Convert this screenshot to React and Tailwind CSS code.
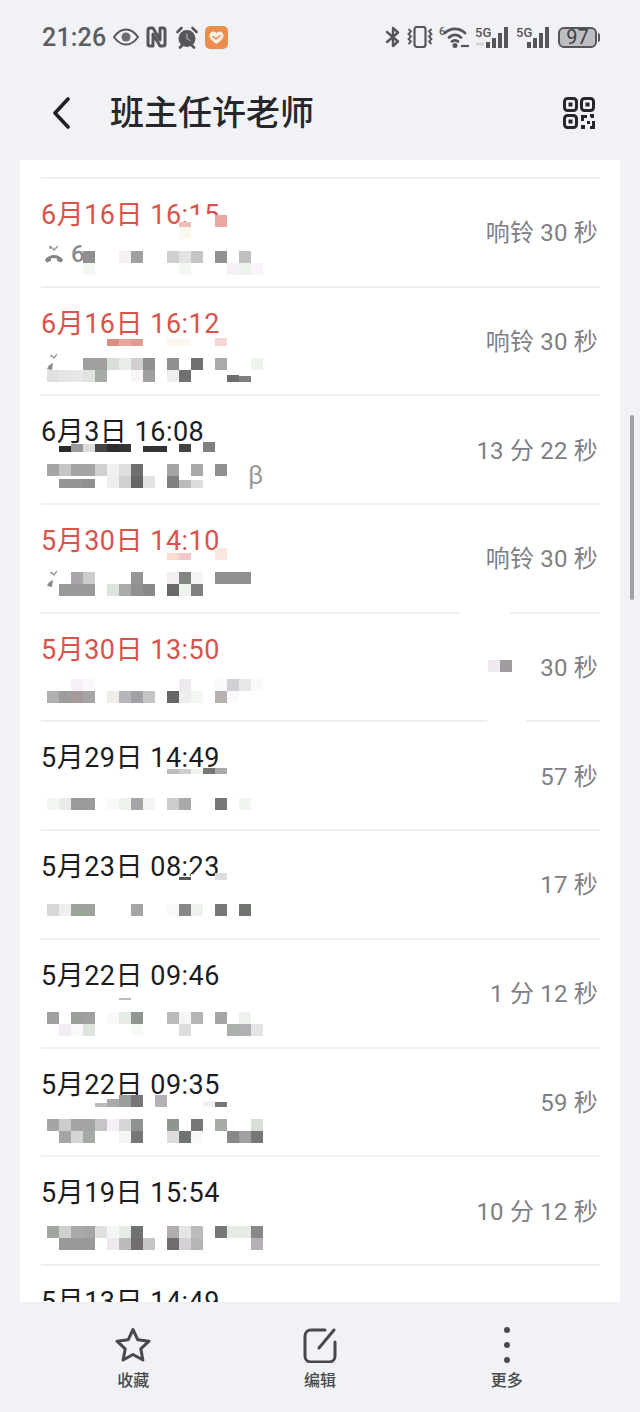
import React from "react";

const FONT = "font-['Roboto','Noto_Sans_CJK_SC',sans-serif]";
const RED = "text-[#d9534b]";
const BLACK = "text-[#1c1c1e]";

// mosaic cells: [col, row, colour, height?]  row 3/4 are the number line, 0-2 lie over the date
const calls = [
  {
    date: "6月16日 16:15", missed: true, right: "响铃 30 秒", dy: 72, icon: "missed",
    cells: [
      [12, 0, "#ffffff"], [13, 0, "#ffffff"], [14, 0, "#e8a9a3"], [11, 0, "#eec0b5", 5], [11, 1, "#fbf8ee"],
      [3, 3, "#8f8f8f"], [6, 3, "#f4f0f4"], [7, 3, "#a0a0a0"], [10, 3, "#cfcfcf"], [11, 3, "#e3e3e3"], [12, 3, "#c5c5c5"], [14, 3, "#939393"], [16, 3, "#c0c0c0"],
      [3, 4, "#f2f7f2"], [11, 4, "#f2f7f2"], [15, 4, "#f6f0f6"], [16, 4, "#eef3ee"], [17, 4, "#faf5fa"],
    ],
  },
  {
    date: "6月16日 16:12", missed: true, right: "响铃 30 秒", dy: 70.5, icon: "stub",
    cells: [
      [5, 1, "#d89080", 7], [6, 1, "#e8a8a0", 7], [7, 1, "#e09c90", 7], [10, 1, "#fbf6ee", 7], [11, 1, "#fbf6ee", 7], [14, 1, "#f5d8d5", 8],
      [3, 3, "#a0a0a0"], [4, 3, "#a0a0a0"], [5, 3, "#d8dfd8"], [6, 3, "#e8eee8"], [7, 3, "#d0d0d0"], [8, 3, "#8f8f8f"], [10, 3, "#909090"], [12, 3, "#707070"], [14, 3, "#aaaaaa"], [17, 3, "#eef3ee"],
      [0, 4, "#e0e0e0"], [1, 4, "#e6e6e6"], [2, 4, "#e8e8e8"], [3, 4, "#dfe4df"], [4, 4, "#a5aca5"], [7, 4, "#f8f4f8"], [8, 4, "#a0a0a0"], [10, 4, "#eeeeee"], [11, 4, "#707070"], [15, 4, "#6d6d6d", 7], [16, 4, "#7f7f7f", 6],
    ],
  },
  {
    date: "6月3日 16:08", right: "13 分 22 秒", dy: 67.5, beta: true,
    cells: [
      [1, 1, "#2a2a2a", 6], [2, 1, "#999999", 8], [3, 1, "#dddddd", 8], [4, 1, "#444444", 8], [5, 1, "#2e2e2e", 8], [6, 1, "#333333", 8], [8, 1, "#333333", 6], [9, 1, "#333333", 6], [11, 1, "#444444", 8], [13, 1, "#808080", 10],
      [0, 3, "#a5a5a5"], [1, 3, "#c5c5c5"], [2, 3, "#a5a5a5"], [3, 3, "#a5a5a5"], [4, 3, "#d0d0d0"], [5, 3, "#f0f0f0"], [6, 3, "#dfdfdf"], [7, 3, "#6f6f6f"], [10, 3, "#a5a5a5"], [12, 3, "#a8a8a8"], [14, 3, "#909090"],
      [1, 4, "#959595", 9], [2, 4, "#959595", 9], [3, 4, "#909090", 9], [5, 4, "#eeeeee"], [6, 4, "#d0d0d0"], [7, 4, "#666666"], [8, 4, "#e2e2e2"], [10, 4, "#808080"], [11, 4, "#bbbbbb", 8], [12, 4, "#dddddd", 8],
    ],
  },
  {
    date: "5月30日 14:10", missed: true, right: "响铃 30 秒", dy: 67, icon: "stub", gap: null,
    cells: [
      [10, 1, "#f8dcd0", 7], [11, 1, "#f4c8c8", 7], [13, 1, "#ffffff", 7], [14, 1, "#f8e8de"],
      [2, 3, "#aaa5aa"], [3, 3, "#cccccc"], [7, 3, "#959595"], [10, 3, "#f2eef2"], [11, 3, "#808580"], [12, 3, "#f4f4f4"], [14, 3, "#8f8f8f"], [15, 3, "#8f8f8f"], [16, 3, "#8f8f8f"],
      [1, 4, "#999999"], [2, 4, "#999999"], [3, 4, "#999999"], [5, 4, "#dde3dd"], [6, 4, "#aaaaaa"], [7, 4, "#909090"], [8, 4, "#888888"], [10, 4, "#6a6a6a"], [11, 4, "#eef3ee"], [12, 4, "#808080"],
    ],
  },
  {
    date: "5月30日 13:50", missed: true, right: "30 秒", dy: 65, gap: [419, 50], patch: true,
    cells: [
      [2, 3, "#f5f0f5"], [3, 3, "#fbf8fb"], [11, 3, "#eee9ee"], [14, 3, "#fbf8fb"], [15, 3, "#d0d0d5"], [16, 3, "#e8e8e8"], [17, 3, "#fbf8fb"],
      [0, 4, "#b0b0b0"], [1, 4, "#9d9d9d"], [2, 4, "#a59c9a"], [3, 4, "#a5a5a5"], [5, 4, "#f0ece6"], [6, 4, "#b5b5bb"], [7, 4, "#a0a0a5"], [8, 4, "#c5c5c5"], [10, 4, "#666666"], [11, 4, "#eeeeee"], [12, 4, "#f2f7f2"], [14, 4, "#b8b0ae"], [15, 4, "#fbf8fb"],
    ],
  },
  {
    date: "5月29日 14:49", right: "57 秒", dy: 75.5, gap: [446, 39],
    cells: [
      [10, 0, "#bbbbbb", 5], [11, 0, "#cccccc", 5], [12, 0, "#eef3ee", 5], [13, 0, "#777777", 6], [14, 0, "#aaaaaa", 6],
      [0, 3, "#f2f7f2"], [1, 3, "#eaeaea"], [2, 3, "#999c99"], [3, 3, "#999c99"], [5, 3, "#fbf8fb"], [6, 3, "#eef3ee"], [7, 3, "#a5a5a8"], [8, 3, "#f5f5f5"], [10, 3, "#cccccc"], [11, 3, "#aaaaaa"], [14, 3, "#777777"], [16, 3, "#eef6ee"],
    ],
  },
  {
    date: "5月23日 08:23", right: "17 秒", dy: 73,
    cells: [
      [11, 0, "#555555", 3], [12, 0, "#ffffff", 6], [14, 0, "#dddde0", 7],
      [0, 3, "#d8d8d8"], [1, 3, "#eeeeee"], [2, 3, "#9ba39b"], [3, 3, "#9ba39b"], [7, 3, "#a5a5a8"], [10, 3, "#fbf8fb"], [11, 3, "#888888"], [12, 3, "#eef3ee"], [14, 3, "#777777"], [16, 3, "#707570"],
    ],
  },
  {
    date: "5月22日 09:46", right: "1 分 12 秒", dy: 72,
    cells: [
      [6, 1, "#bbbbbb", 2],
      [0, 3, "#a0a0a0"], [2, 3, "#9ba09b"], [3, 3, "#a0a0a0"], [5, 3, "#fbf8fb"], [6, 3, "#e5ebe5"], [7, 3, "#8f968f"], [10, 3, "#bbbbbb"], [11, 3, "#f5f5f5"], [12, 3, "#b5b5b5"], [14, 3, "#a5a5a5"], [16, 3, "#eef3ee"],
      [1, 4, "#f3eef3"], [2, 4, "#fbf8fb"], [3, 4, "#dde3dd"], [7, 4, "#f5faf5"], [11, 4, "#dddddd"], [15, 4, "#aab0aa"], [16, 4, "#b0b0b5"], [17, 4, "#e5e5e5"],
    ],
  },
  {
    date: "5月22日 09:35", right: "59 秒", dy: 70.5,
    cells: [
      [4, 1, "#bbbbbb", 4], [5, 1, "#aaaaaa", 8], [6, 1, "#99a099"], [7, 1, "#777777"], [9, 1, "#b5b0b5"], [13, 1, "#eef3ee", 6], [14, 1, "#777777", 5],
      [0, 3, "#a5a5a5"], [1, 3, "#cccccc"], [2, 3, "#a5a5a5"], [3, 3, "#a5a5a5"], [4, 3, "#c5c5c5"], [5, 3, "#f5f0f5"], [6, 3, "#d5d5d5"], [7, 3, "#8f938f"], [10, 3, "#8f968f"], [12, 3, "#777777"], [14, 3, "#a5aba5"], [17, 3, "#d8ddd8"],
      [1, 4, "#a5a5a5"], [2, 4, "#d5d5d5"], [3, 4, "#a5aba5"], [6, 4, "#f5f5f5"], [7, 4, "#777777"], [10, 4, "#dddddd"], [11, 4, "#6f736f"], [12, 4, "#fbf8fb"], [15, 4, "#888888"], [16, 4, "#a0a0a0"], [17, 4, "#777777"],
    ],
  },
  {
    date: "5月19日 15:54", right: "10 分 12 秒", dy: 69,
    cells: [
      [0, 3, "#a0a8a0"], [1, 3, "#d0d0d0"], [2, 3, "#aaaaaa"], [3, 3, "#a5a5a5"], [4, 3, "#e0e0e0"], [5, 3, "#f3f7f3"], [6, 3, "#e5ebe5"], [7, 3, "#6f736f"], [10, 3, "#b0acb0"], [11, 3, "#e5e5e5"], [12, 3, "#bbbbbb"], [14, 3, "#777777"], [15, 3, "#e5ebe5"], [16, 3, "#e5ebe5"], [17, 3, "#888888"],
      [1, 4, "#999999"], [2, 4, "#999999"], [3, 4, "#999999"], [5, 4, "#eee8ee"], [6, 4, "#bbbbbb"], [7, 4, "#706c70"], [8, 4, "#c5c5c5"], [10, 4, "#706c70"], [11, 4, "#d5d0d5"], [12, 4, "#b5b5b5"], [17, 4, "#b5b0b5"],
    ],
  },
  { date: "5月13日 14:49", right: "", dy: 70, cells: [] },
];

function StatusLeft() {
  return (
    <div className="flex items-center">
      <span className={`${FONT} text-[25px] leading-none font-medium tracking-[0.2px] text-[#5c5d61]`}>21:26</span>
      {/* eye */}
      <svg width="26" height="18" viewBox="0 0 26 18" className="ml-[7px]" fill="none" stroke="#55565a" strokeWidth="2">
        <path d="M1 9c3.500-5 7.500-7.500 12-7.500S21.500 4 25 9c-3.500 5-7.500 7.500-12 7.500S4.500 14 1 9z" />
        <circle cx="13" cy="9" r="4.500" fill="#6c6d70" stroke="none" />
      </svg>
      {/* nfc */}
      <svg width="21" height="22" viewBox="0 0 21 22" className="ml-[7px]" fill="none" stroke="#55565a" strokeWidth="3" strokeLinecap="round" strokeLinejoin="round">
        <path d="M5.500 2H4C2.800 2 2 2.800 2 4v14c0 1.200 .8 2 2 2h3V8l7 12" />
        <path d="M15.500 20H17c1.200 0 2-.8 2-2V4c0-1.200-.8-2-2-2h-3v12L7 2" />
      </svg>
      {/* alarm */}
      <svg width="22" height="23" viewBox="0 0 22 23" className="ml-[9px]" fill="none">
        <circle cx="11" cy="12.500" r="8.500" fill="#55565a" />
        <path d="M1.500 6l4-4M20.500 6l-4-4M4 21.500l2-2M18 21.500l-2-2" stroke="#55565a" strokeWidth="2.600" strokeLinecap="round" />
        <path d="M11 8v4.500l3 2" stroke="#9fa0a3" strokeWidth="1.400" strokeLinecap="round" />
      </svg>
      {/* orange app */}
      <svg width="23" height="23" viewBox="0 0 23 23" className="ml-[7px]" fill="none">
        <rect width="23" height="23" rx="5" fill="#ed8d4d" />
        <path d="M11.500 18C7 15 4.500 12.500 4.500 9.500 4.500 7.200 6.200 5.500 8.200 5.500c1.400 0 2.500 .7 3.300 1.800.8-1.100 1.900-1.800 3.300-1.800 2 0 3.700 1.700 3.700 4 0 3-2.500 5.500-7 8.500z" fill="#fdf1e6" />
        <path d="M8 10.500l3 2.500 4-3.500" stroke="#ed8d4d" strokeWidth="1.600" strokeLinecap="round" />
      </svg>
    </div>
  );
}

function Signal({ small }) {
  return (
    <svg width="35" height="24" viewBox="0 0 35 24">
      <text x="0" y="12" className={FONT} fontSize="13" fontWeight="500" fill="#55565a">5G</text>
      {small && <path d="M1 19h8" stroke="#d4d5d8" strokeWidth="3" />}
      <rect x="11" y="17" width="4" height="6" fill="#55565a" />
      <rect x="17" y="13" width="4" height="10" fill="#55565a" />
      <rect x="23" y="8" width="4" height="15" fill="#55565a" />
      <rect x="29" y="2" width="4" height="21" fill="#55565a" />
    </svg>
  );
}

function StatusRight() {
  return (
    <div className="flex items-center">
      {/* bluetooth */}
      <svg width="16" height="22" viewBox="0 0 16 22" fill="none" stroke="#55565a" strokeWidth="2.400" strokeLinejoin="round" strokeLinecap="round">
        <path d="M2 6l11 9.500L8 20V2l5 4.500L2 16" />
      </svg>
      {/* vibrate */}
      <svg width="26" height="22" viewBox="0 0 26 22" className="ml-[6px]" fill="none" stroke="#55565a" strokeWidth="1.800">
        <rect x="7.500" y="1" width="11" height="20" rx="2.500" strokeWidth="2.200" />
        <path d="M1.500 3l2.500 2.500L1.500 8 4 10.500 1.500 13 4 15.500 1.500 18" />
        <path d="M24.500 3L22 5.500 24.500 8 22 10.500 24.500 13 22 15.500 24.500 18" />
      </svg>
      {/* wifi */}
      <svg width="30" height="24" viewBox="0 0 30 24" className="ml-[6px]" fill="none">
        <text x="0" y="10" className={FONT} fontSize="11" fontWeight="500" fill="#55565a">6</text>
        <path d="M6 8c5.500-5.500 14-5.500 20 0M10 12.500c3.500-3.500 8.500-3.500 12 0M13 16.500c1.500-1.500 4.500-1.500 6 0" stroke="#55565a" strokeWidth="2.800" strokeLinecap="round" />
        <circle cx="16" cy="20.500" r="2.500" fill="#55565a" />
        <path d="M22 21h8" stroke="#55565a" strokeWidth="2.200" />
      </svg>
      <div className="ml-[6px]">
        <Signal small />
      </div>
      <div className="ml-[6px]">
        <Signal />
      </div>
      {/* battery */}
      <div className="ml-[7px] flex items-center">
        <div className={`${FONT} flex h-[21px] w-[39px] items-center justify-center rounded-[6px] border-2 border-[#55565a] bg-[#bdbec2] text-[20px] leading-none text-[#3f4044]`}>
          97
        </div>
        <div className="ml-[1px] h-[9px] w-[2px] rounded-r-sm bg-[#55565a]" />
      </div>
    </div>
  );
}

function QrIcon() {
  return (
    <svg width="32" height="32" viewBox="0 0 32 32" fill="none">
      <rect x="1.500" y="1.500" width="12" height="12" rx="3" stroke="#26272a" strokeWidth="3" />
      <rect x="18.500" y="1.500" width="12" height="12" rx="3" stroke="#26272a" strokeWidth="3" />
      <rect x="1.500" y="18.500" width="12" height="12" rx="3" stroke="#26272a" strokeWidth="3" />
      <rect x="5.500" y="5.500" width="4" height="4" fill="#26272a" />
      <rect x="22.500" y="5.500" width="4" height="4" fill="#26272a" />
      <rect x="5.500" y="22.500" width="4" height="4" fill="#26272a" />
      <path d="M18 18h6v3h-3v3h-3zM27 17h4v4h-3v-1h-1zM24 24h3v3h-3zM29 24h3v8h-5v-3h2zM18 28h4v4h-4z" fill="#26272a" />
    </svg>
  );
}

function MissedIcon() {
  return (
    <>
      <svg width="22" height="22" viewBox="0 0 22 22" fill="none" className="absolute left-[3px] top-[65px]">
        <path d="M6 2l4 4 4-4M6 2v3" stroke="#9a9a9a" strokeWidth="1.500" />
        <path d="M1 15.500c4.500-6 13.500-6 18 0l-1.500 3-4.500-1.500v-2.500c-2-.8-4-.8-6 0V17l-4.500 1.500z" fill="#858585" />
      </svg>
      <span className="absolute left-[30px] top-[60px] text-[24px] leading-[30px] font-medium text-[#8a8a8a]">6</span>
    </>
  );
}

function StubIcon() {
  return (
    <svg width="20" height="22" viewBox="0 0 20 22" fill="none" className="absolute left-[4px] top-[64px]">
      <path d="M6 3l3 3 3-4M6 3v2" stroke="#9a9a9a" strokeWidth="1.300" />
      <path d="M2 17c1-3 3-5 6-6l-1 7z" fill="#8a8a8a" />
    </svg>
  );
}

function Mosaic({ cells, top }) {
  return (
    <div
      className="absolute left-[6px] grid grid-cols-[repeat(18,12px)] grid-rows-[repeat(5,12px)]"
      style={{ top }}
    >
      {cells.map(([col, row, colour, h], i) => (
        <div
          key={i}
          className="self-end"
          style={{ gridColumn: col + 1, gridRow: row + 1, background: colour, height: h || 12 }}
        />
      ))}
    </div>
  );
}

function CallRow({ call }) {
  return (
    <div className={`${FONT} relative flex h-[108.7px] shrink-0 items-center justify-between border-t-2 border-[#f0f0f2]`}>
      <div className={`self-start pt-[20px] text-[27px] leading-[32px] tracking-[0.5px] ${call.missed ? RED : BLACK}`}>{call.date}</div>
      <div className="pr-[2px] pt-[2px] text-[24px] leading-none tracking-[0.2px] text-[#808084]">{call.right}</div>
      {call.icon === "missed" && <MissedIcon />}
      {call.patch && (
        <div className="absolute left-[447px] top-[46px] flex h-[12px]">
          <div className="h-[12px] w-[12px] bg-[#f0eaf0]" />
          <div className="h-[12px] w-[12px] bg-[#a09ca0]" />
        </div>
      )}
      {call.gap && (
        <div
          className="absolute -top-[2px] h-[2px] bg-white"
          style={{ left: call.gap[0], width: call.gap[1] }}
        />
      )}
      <Mosaic cells={call.cells} top={call.dy - 36} />
      {call.icon === "stub" && <StubIcon />}
      {call.beta && (
        <span className="absolute left-[207px] top-[66px] text-[26px] leading-none text-[#9a9a9a]">β</span>
      )}
    </div>
  );
}

function BottomAction({ label, children }) {
  return (
    <div className="flex flex-col items-center">
      <div className="flex h-[38px] items-center">{children}</div>
      <span className={`${FONT} mt-[6px] text-[16px] leading-[22px] font-medium text-[#48494d]`}>{label}</span>
    </div>
  );
}

export default function App() {
  return (
    <div className="relative flex h-[1412px] w-[640px] flex-col overflow-hidden bg-[#f1f2f6]">
      <div className="flex h-[74px] shrink-0 items-center justify-between pl-[42px] pr-[40px]">
        <StatusLeft />
        <StatusRight />
      </div>

      <div className="flex h-[86px] shrink-0 items-center pb-[8px] pl-[52px] pr-[45px]">
        <svg width="18" height="32" viewBox="0 0 18 32" fill="none" stroke="#1f2023" strokeWidth="3.600" strokeLinecap="round" strokeLinejoin="round">
          <path d="M16 2L3 16l13 14" />
        </svg>
        <h1 className={`${FONT} ml-[40px] flex-1 text-[34px] leading-none font-medium text-[#26272a]`}>班主任许老师</h1>
        <QrIcon />
      </div>

      <div className="mx-[20px] flex h-[1142px] shrink-0 flex-col overflow-hidden bg-white pl-[21px] pr-[20px] pt-[17px]">
        {calls.map((call) => (
          <CallRow key={call.date} call={call} />
        ))}
      </div>

      <div className="grid flex-1 grid-cols-3 px-[40px] pt-[24px]">
        <BottomAction label="收藏">
          <svg width="36" height="36" viewBox="0 0 36 36" fill="none" stroke="#48494d" strokeWidth="3" strokeLinejoin="round">
            <path d="M18 2.500l4.800 10.300 11.200 1.400-8.200 7.700 2.100 11.100L18 27.500 8.100 33l2.100-11.100L2 14.200l11.200-1.400z" />
          </svg>
        </BottomAction>
        <BottomAction label="编辑">
          <svg width="34" height="36" viewBox="0 0 34 36" fill="none" stroke="#48494d" strokeWidth="3" strokeLinecap="round">
            <path d="M22 3H8C4.500 3 2 5.500 2 9v20c0 3.500 2.500 6 6 6h18c3.500 0 6-2.500 6-6V15" />
            <path d="M31 3L16 21" />
          </svg>
        </BottomAction>
        <BottomAction label="更多">
          <svg width="6" height="36" viewBox="0 0 6 36" fill="#48494d">
            <circle cx="3" cy="3" r="3" />
            <circle cx="3" cy="18" r="3" />
            <circle cx="3" cy="33" r="3" />
          </svg>
        </BottomAction>
      </div>

      {/* scrollbar sits over the page edge */}
      <div className="absolute left-[630px] top-[415px] h-[185px] w-[4px] rounded-full bg-[#a0a0a5]" />
    </div>
  );
}
